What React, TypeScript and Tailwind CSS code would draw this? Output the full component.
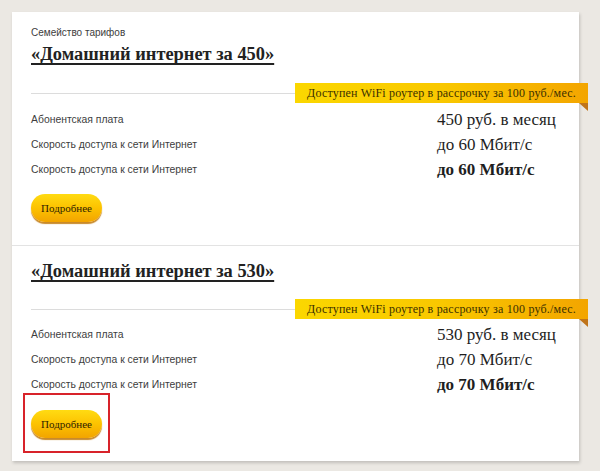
const sans = { fontFamily: '"Liberation Sans", Arial, sans-serif' };
const serif = { fontFamily: '"Liberation Serif", "Times New Roman", serif' };

type Tariff = {
  title: string;
  price: string;
  speed: string;
  family?: boolean;
  marked?: boolean;
};

const tariffs: Tariff[] = [
  { title: "«Домашний интернет за 450»", price: "450 руб. в месяц", speed: "до 60 Мбит/с", family: true },
  { title: "«Домашний интернет за 530»", price: "530 руб. в месяц", speed: "до 70 Мбит/с", marked: true },
];

const Ribbon = () => (
  <div className="flex items-center">
    <div className="h-px flex-1 bg-[#dcdcdc]" />
    <div className="relative -mr-[9px]">
      <div
        className="flex h-[20px] w-[293px] items-center bg-gradient-to-r from-[#fbd700] via-[#f9c800] to-[#f3a500] pl-[12px] text-[12px] tracking-[0.2px] text-[#3b3000] whitespace-nowrap"
        style={serif}
      >
        Доступен WiFi роутер в рассрочку за 100 руб./мес.
      </div>
      <div className="absolute right-0 top-[20px] h-0 w-0 border-l-[9px] border-t-[8px] border-l-transparent border-t-[#c0741a]" />
    </div>
  </div>
);

const MoreButton = ({ marked }: { marked?: boolean }) => (
  <div className="relative w-[71px]">
    {marked && (
      <div className="absolute -left-[8px] -right-[8px] -top-[17px] -bottom-[15px] border-2 border-[#d8232a]" />
    )}
    <button
      className="flex h-[28px] w-[71px] items-center justify-center rounded-full bg-gradient-to-b from-[#ffdb12] via-[#fcc200] to-[#f2a400] text-[11px] text-[#2e2200] shadow-[0_2px_1px_#c98a2a]"
      style={serif}
    >
      Подробнее
    </button>
  </div>
);

const Row = ({ label, value, bold }: { label: string; value: string; bold?: boolean }) => (
  <div className="flex h-[25px] items-center">
    <div className="w-[406px] text-[10.4px] text-[#3d3d3d]" style={sans}>
      {label}
    </div>
    <div className={`text-[17px] text-[#1e1e1e] ${bold ? "font-bold" : ""}`} style={serif}>
      {value}
    </div>
  </div>
);

const TariffBlock = ({ t }: { t: Tariff }) => (
  <section className={`pl-[19px] ${t.family ? "pt-[15px]" : "pt-[13px]"} pb-[23px]`}>
    {t.family && (
      <div className="h-[12px] text-[10px] leading-[12px] text-[#3d3d3d]" style={sans}>
        Семейство тарифов
      </div>
    )}
    <h2
      className={`${t.family ? "mt-[3px]" : ""} h-[24px] text-[18.4px] font-bold leading-[24px] text-[#222] underline decoration-[1.5px] underline-offset-[3px] [text-decoration-skip-ink:none]`}
      style={serif}
    >
      {t.title}
    </h2>
    <div className={t.family ? "mt-[17px]" : "mt-[16px]"}>
      <Ribbon />
    </div>
    <div className={t.family ? "mt-[4px]" : "mt-[3px]"}>
      <Row label="Абонентская плата" value={t.price} />
      <Row label="Скорость доступа к сети Интернет" value={t.speed} />
      <Row label="Скорость доступа к сети Интернет" value={t.speed} bold />
    </div>
    <div className={t.family ? "mt-[12px]" : "mt-[13px]"}>
      <MoreButton marked={t.marked} />
    </div>
  </section>
);

export default function App() {
  return (
    <div className="h-[471px] w-[600px] bg-[#ebe8e3] pl-[12px] pt-[12px]">
      <div className="w-[567px] bg-white shadow-[1px_2px_3px_rgba(0,0,0,0.18)]">
        <TariffBlock t={tariffs[0]} />
        <div className="h-px bg-[#e3e3e3]" />
        <TariffBlock t={tariffs[1]} />
      </div>
    </div>
  );
}
